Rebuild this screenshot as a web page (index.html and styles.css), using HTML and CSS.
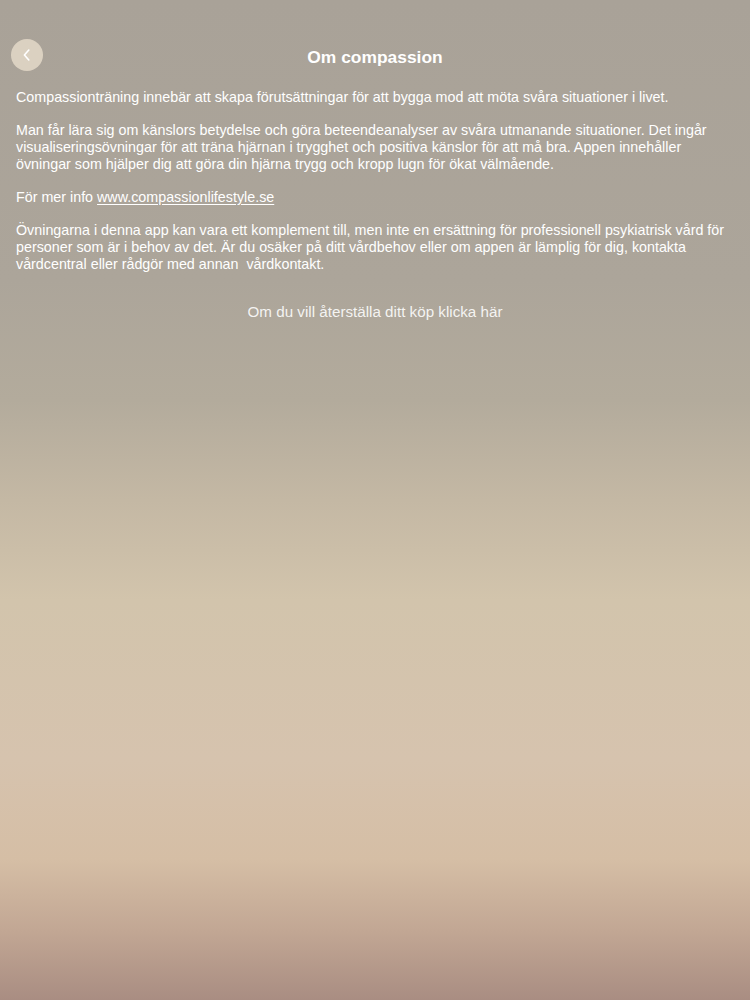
FILE: index.html
```html
<!DOCTYPE html>
<html lang="sv">
<head>
<meta charset="utf-8">
<title>Om compassion</title>
<link rel="stylesheet" href="styles.css">
</head>
<body>
<div class="screen">
  <header class="topbar">
    <button class="back" aria-label="Tillbaka">
      <svg width="10" height="14" viewBox="0 0 10 14"><path d="M6.8 2 L2.4 7 L6.8 12" fill="none" stroke="#ffffff" stroke-width="1.6" stroke-linecap="round" stroke-linejoin="round"/></svg>
    </button>
    <h1 class="title">Om compassion</h1>
  </header>
  <main class="content">
    <p>Compassionträning innebär att skapa förutsättningar för att bygga mod att möta svåra situationer i livet.</p>
    <p>Man får lära sig om känslors betydelse och göra beteendeanalyser av svåra utmanande situationer. Det ingår visualiseringsövningar för att träna hjärnan i trygghet och positiva känslor för att må bra. Appen innehåller övningar som hjälper dig att göra din hjärna trygg och kropp lugn för ökat välmående.</p>
    <p>För mer info <a class="link" href="#">www.compassionlifestyle.se</a></p>
    <p>Övningarna i denna app kan vara ett komplement till, men inte en ersättning för professionell psykiatrisk vård för personer som är i behov av det. Är du osäker på ditt vårdbehov eller om appen är lämplig för dig, kontakta vårdcentral eller rådgör med annan &nbsp;vårdkontakt.</p>
    <p class="restore">Om du vill återställa ditt köp klicka här</p>
  </main>
</div>
</body>
</html>
```

FILE: styles.css
```css
html, body {
  margin: 0;
  padding: 0;
}
body {
  width: 750px;
  height: 1000px;
  overflow: hidden;
  font-family: "Liberation Sans", Arial, sans-serif;
  color: #ffffff;
}
.screen {
  height: 1000px;
  box-sizing: border-box;
  padding: 40px 0 0 0;
  background: linear-gradient(180deg,
    #a9a298 0%,
    #aca59a 28%,
    #b3ab9c 40%,
    #c4b8a4 50%,
    #d2c4ac 60%,
    #d6c3ae 76%,
    #d5bea5 86%,
    #c2a794 93%,
    #a98d82 100%);
}
.topbar {
  position: relative;
  height: 34px;
  display: flex;
  align-items: center;
  justify-content: center;
}
.back {
  position: absolute;
  left: 11px;
  top: -1px;
  width: 32px;
  height: 32px;
  border-radius: 50%;
  border: none;
  padding: 0;
  background: #dbd1c1;
  display: flex;
  align-items: center;
  justify-content: center;
}
.title {
  margin: 0;
  font-size: 17.4px;
  font-weight: bold;
}
.content {
  padding: 15px 16px 0 16px;
}
.content p {
  margin: 0 0 16px 0;
  font-size: 14.3px;
  line-height: 17px;
}
.link {
  color: #ffffff;
  text-decoration: underline;
  text-underline-offset: 2px;
}
.content p.restore {
  margin-top: 30px;
  text-align: center;
  font-size: 15.2px;
  color: rgba(255,255,255,0.88);
}
```
